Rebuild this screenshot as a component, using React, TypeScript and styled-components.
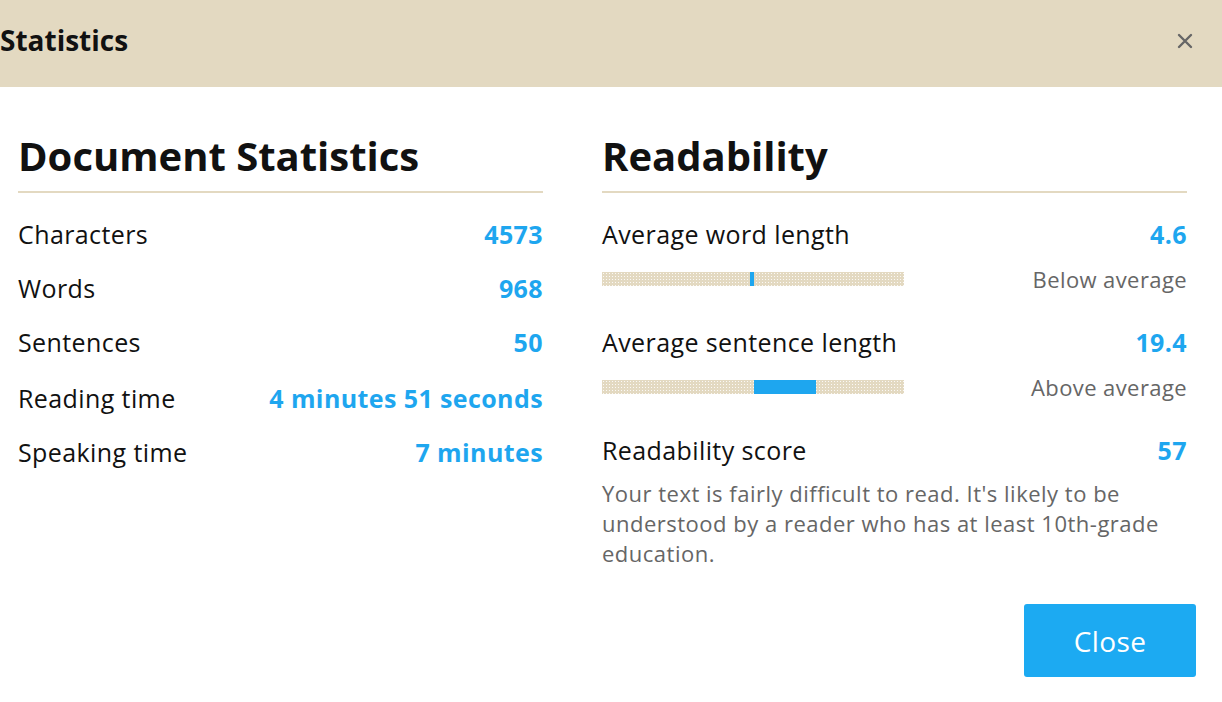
import styled, { createGlobalStyle } from "styled-components";

const GlobalStyle = createGlobalStyle`
    html, body {
        margin: 0;
        padding: 0;
        background: #ffffff;
        font-family: "Open Sans", "Noto Sans", sans-serif;
        color: #111;
    }
`;

const BEIGE = "#e3d9c1";
const BLUE = "#1ea6ef";

type Stat = { label: string; value: string; tall?: boolean };

const docStats: Stat[] = [
    { label: "Characters", value: "4573" },
    { label: "Words", value: "968" },
    { label: "Sentences", value: "50", tall: true },
    { label: "Reading time", value: "4 minutes 51 seconds" },
    { label: "Speaking time", value: "7 minutes" },
];

export default function App() {
    return (
        <Dialog>
            <GlobalStyle />
            <Header>
                <Title>Statistics</Title>
                <CloseIcon aria-label="close">
                    <svg width="16" height="16" viewBox="0 0 16 16">
                        <path d="M2 2 L14 14 M14 2 L2 14" stroke="#666" strokeWidth="2.4" strokeLinecap="round" />
                    </svg>
                </CloseIcon>
            </Header>

            <Body>
                <Column>
                    <Heading>Document Statistics</Heading>
                    {docStats.map((s) => (
                        <Row key={s.label} $tall={s.tall}>
                            <Label>{s.label}</Label>
                            <Value>{s.value}</Value>
                        </Row>
                    ))}
                </Column>

                <Column>
                    <Heading>Readability</Heading>
                    <Metric>
                        <Row>
                            <Label>Average word length</Label>
                            <Value>4.6</Value>
                        </Row>
                        <BarRow>
                            <Bar>
                                <Fill style={{ left: 148, width: 4 }} />
                            </Bar>
                            <Note>Below average</Note>
                        </BarRow>
                    </Metric>
                    <Metric>
                        <Row>
                            <Label>Average sentence length</Label>
                            <Value>19.4</Value>
                        </Row>
                        <BarRow>
                            <Bar>
                                <Fill style={{ left: 152, width: 62 }} />
                            </Bar>
                            <Note>Above average</Note>
                        </BarRow>
                    </Metric>
                    <Metric>
                        <Row>
                            <Label>Readability score</Label>
                            <Value>57</Value>
                        </Row>
                        <Description>
                            Your text is fairly difficult to read. It's likely to be understood by a reader who has at
                            least 10th-grade education.
                        </Description>
                    </Metric>
                </Column>
            </Body>

            <Footer>
                <CloseButton>Close</CloseButton>
            </Footer>
        </Dialog>
    );
}

const Dialog = styled.div`
    width: 1222px;
    height: 702px;
    background: #fff;
    overflow: hidden;
`;

const Header = styled.div`
    height: 87px;
    background: ${BEIGE};
    display: flex;
    align-items: center;
    justify-content: space-between;
    padding: 0 29px 0 0;
    box-sizing: border-box;
`;

const Title = styled.h2`
    margin: 0 0 8px 0;
    font-size: 28px;
    font-weight: 700;
    color: #111;
`;

const CloseIcon = styled.span`
    display: flex;
    cursor: pointer;
    margin-bottom: 6px;
`;

const Body = styled.div`
    display: grid;
    grid-template-columns: 525px 585px;
    column-gap: 59px;
    padding: 42px 0 0 18px;
`;

const Column = styled.div`
    display: flex;
    flex-direction: column;
`;

const Heading = styled.h1`
    margin: 0 0 14px 0;
    padding-bottom: 8px;
    font-size: 40px;
    font-weight: 700;
    line-height: 54px;
    color: #111;
    border-bottom: 2px solid ${BEIGE};
`;

const Row = styled.div<{ $tall?: boolean }>`
    display: flex;
    justify-content: space-between;
    align-items: center;
    height: 54px;
    margin-bottom: ${({ $tall }) => ($tall ? "2px" : "0")};
    font-size: 25px;
    letter-spacing: 0.4px;
`;

const Label = styled.span`
    color: #111;
`;

const Value = styled.span`
    font-weight: 700;
    color: ${BLUE};
`;

const Metric = styled.div`
    display: flex;
    flex-direction: column;
`;

const BarRow = styled.div`
    display: flex;
    justify-content: space-between;
    align-items: center;
    height: 36px;
    margin-bottom: 18px;
`;

const Bar = styled.div`
    position: relative;
    width: 302px;
    height: 14px;
    background-color: ${BEIGE};
    background-image: radial-gradient(circle, rgba(255, 255, 255, 0.85) 0.7px, transparent 1px);
    background-size: 3px 3px;
`;

const Fill = styled.div`
    position: absolute;
    top: 0;
    bottom: 0;
    background: ${BLUE};
`;

const Note = styled.span`
    font-size: 22px;
    letter-spacing: 0.4px;
    color: #666;
`;

const Description = styled.p`
    margin: 1px 0 0 0;
    font-size: 22px;
    letter-spacing: 0.5px;
    line-height: 30px;
    color: #666;
    padding-right: 10px;
`;

const Footer = styled.div`
    display: flex;
    justify-content: flex-end;
    padding: 36px 26px 0 0;
`;

const CloseButton = styled.button`
    width: 172px;
    height: 73px;
    border: none;
    border-radius: 3px;
    background: #1caaf2;
    color: #fff;
    font-family: "Open Sans", "Noto Sans", sans-serif;
    font-size: 28px;
    letter-spacing: 0.4px;
    cursor: pointer;
`;
